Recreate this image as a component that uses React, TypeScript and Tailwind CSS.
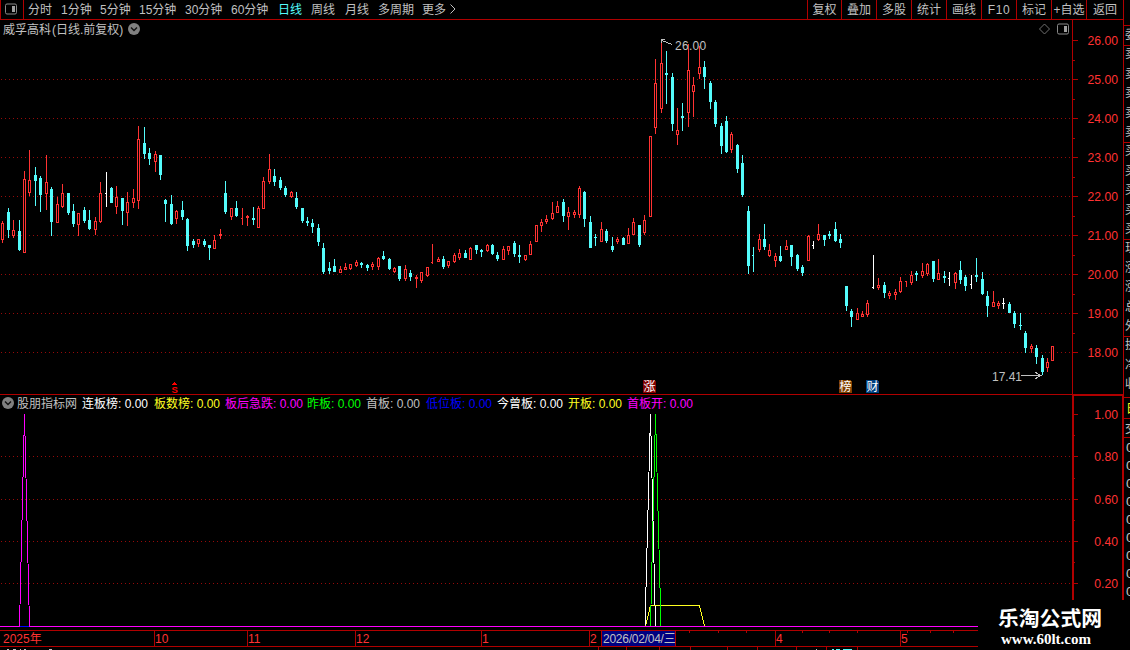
import React from "react";

type Tone = "r" | "c" | "w";
type Candle = [x: number, high: number, top: number, bottom: number, low: number, tone: Tone, tick?: "left"];

const CANDLES: Candle[] = [
  [2, 221, 223, 240, 243, "r"], [8, 208, 212, 230, 238, "c"], [13, 220, 230, 236, 238, "r"], [19, 220, 231, 250, 251, "c"],
  [24, 171, 179, 253, 253, "r"], [29, 150, 180, 193, 196, "r"], [35, 167, 175, 181, 206, "c"], [40, 176, 178, 195, 212, "c"],
  [46, 155, 182, 194, 210, "r"], [51, 187, 189, 222, 236, "c"], [57, 197, 204, 223, 223, "r"], [62, 184, 193, 207, 208, "r"],
  [68, 193, 193, 213, 215, "c"], [73, 204, 211, 224, 227, "c"], [78, 213, 213, 225, 236, "r"], [84, 207, 210, 221, 223, "c"],
  [89, 210, 220, 229, 230, "c"], [95, 217, 221, 230, 235, "r"], [100, 182, 193, 222, 223, "r"], [106, 172, 193, 194, 207, "w", "left"],
  [111, 187, 188, 203, 203, "c"], [116, 186, 197, 207, 214, "r"], [122, 198, 198, 211, 225, "c"], [127, 192, 202, 213, 226, "r"],
  [133, 189, 198, 203, 208, "r"], [138, 126, 139, 201, 209, "r"], [144, 127, 143, 154, 159, "c"], [149, 148, 153, 159, 165, "c"],
  [155, 151, 154, 162, 172, "r"], [160, 155, 155, 175, 180, "c"], [165, 199, 200, 204, 222, "c"], [171, 195, 204, 224, 225, "c"],
  [176, 210, 211, 219, 224, "r"], [182, 201, 210, 217, 220, "c"], [187, 218, 219, 246, 251, "c"], [193, 239, 241, 245, 248, "c"],
  [198, 239, 239, 244, 247, "r"], [204, 239, 241, 245, 247, "c"], [209, 245, 245, 248, 260, "c"], [214, 235, 240, 249, 249, "r"],
  [220, 229, 234, 236, 239, "r"], [225, 181, 193, 212, 214, "c"], [231, 208, 208, 217, 220, "r"], [236, 201, 208, 216, 217, "c"],
  [242, 208, 218, 219, 225, "r", "left"], [247, 215, 216, 218, 226, "r"], [253, 207, 218, 220, 225, "c"], [258, 206, 208, 228, 228, "r"],
  [263, 177, 181, 209, 209, "r"], [269, 154, 169, 182, 184, "r"], [274, 169, 176, 182, 186, "c"], [280, 177, 180, 188, 190, "c"],
  [285, 186, 188, 195, 197, "c"], [291, 191, 192, 197, 198, "r"], [296, 192, 198, 207, 209, "c"], [302, 208, 208, 221, 223, "c"],
  [307, 217, 221, 223, 226, "c"], [312, 219, 223, 227, 233, "c"], [318, 224, 228, 242, 246, "c"], [323, 243, 248, 272, 274, "c"],
  [329, 262, 268, 271, 274, "c"], [334, 259, 266, 272, 272, "c"], [340, 266, 269, 273, 273, "r"], [345, 263, 267, 270, 270, "r"],
  [350, 264, 264, 269, 270, "r"], [356, 260, 262, 266, 267, "r"], [361, 262, 263, 265, 268, "c"], [367, 264, 265, 268, 271, "c"],
  [372, 262, 264, 267, 270, "r"], [378, 257, 258, 267, 270, "r"], [383, 251, 256, 259, 260, "c"], [389, 258, 259, 269, 270, "c"],
  [394, 267, 268, 272, 273, "r"], [399, 266, 266, 279, 281, "c"], [405, 265, 269, 279, 281, "r"], [410, 270, 273, 277, 281, "c"],
  [416, 275, 277, 279, 288, "r"], [421, 272, 272, 281, 283, "r"], [427, 267, 267, 276, 277, "r"], [432, 244, 262, 263, 264, "r", "left"],
  [438, 257, 259, 262, 262, "r"], [443, 256, 259, 267, 269, "c"], [448, 261, 261, 266, 268, "r"], [454, 253, 255, 262, 263, "r"],
  [459, 249, 253, 258, 260, "r"], [465, 250, 253, 258, 258, "c"], [470, 247, 248, 260, 260, "r"], [476, 245, 245, 250, 254, "c"],
  [481, 249, 250, 252, 257, "c"], [487, 244, 245, 251, 252, "r"], [492, 244, 245, 254, 255, "c"], [497, 252, 255, 259, 261, "c"],
  [503, 246, 249, 260, 260, "r"], [508, 246, 246, 251, 255, "r"], [514, 241, 243, 254, 257, "c"], [519, 245, 255, 257, 263, "c"],
  [525, 255, 255, 260, 261, "r"], [530, 241, 244, 255, 255, "r"], [536, 225, 225, 242, 242, "r"], [541, 219, 222, 226, 232, "r"],
  [546, 215, 219, 222, 224, "r"], [552, 202, 213, 219, 220, "r"], [557, 201, 206, 213, 213, "r"], [563, 199, 202, 216, 222, "c"],
  [568, 207, 212, 217, 230, "r"], [574, 210, 212, 215, 218, "r"], [579, 186, 188, 215, 218, "r"], [584, 191, 192, 219, 227, "c"],
  [590, 216, 222, 248, 248, "c"], [595, 234, 237, 238, 246, "c"], [601, 222, 229, 242, 242, "r"], [606, 229, 231, 241, 243, "c"],
  [612, 237, 246, 250, 252, "c"], [617, 237, 239, 242, 244, "r"], [623, 237, 238, 245, 245, "c"], [628, 228, 235, 244, 244, "r"],
  [633, 218, 222, 235, 235, "r"], [639, 225, 225, 245, 247, "c"], [644, 215, 220, 233, 235, "r"], [650, 136, 136, 217, 217, "r"],
  [655, 59, 83, 128, 134, "r"], [661, 43, 63, 109, 113, "r"], [666, 51, 73, 75, 104, "c"], [672, 73, 77, 124, 131, "c"],
  [677, 108, 130, 135, 145, "r"], [682, 103, 116, 118, 131, "c"], [688, 44, 70, 113, 127, "r"], [693, 77, 85, 92, 117, "r"],
  [699, 46, 67, 74, 79, "r"], [704, 61, 67, 77, 89, "c"], [710, 81, 83, 102, 109, "c"], [715, 100, 102, 124, 127, "c"],
  [721, 123, 126, 146, 154, "c"], [726, 116, 121, 152, 153, "c"], [731, 132, 134, 150, 153, "r"], [737, 144, 145, 169, 173, "c"],
  [742, 155, 163, 195, 197, "c"], [748, 206, 211, 266, 274, "c"], [753, 247, 255, 256, 272, "c", "left"], [759, 234, 239, 250, 252, "r"],
  [764, 224, 239, 247, 250, "c"], [769, 244, 250, 256, 257, "r"], [775, 253, 256, 261, 267, "r"], [780, 246, 256, 261, 262, "c"],
  [786, 240, 246, 250, 250, "r"], [791, 245, 245, 257, 266, "c"], [797, 254, 255, 269, 271, "c"], [802, 265, 267, 273, 276, "c"],
  [808, 235, 236, 261, 261, "r"], [813, 241, 245, 246, 249, "w", "left"], [818, 224, 234, 240, 241, "r"], [824, 235, 235, 240, 246, "c"],
  [829, 231, 234, 236, 239, "c"], [835, 222, 229, 241, 242, "c"], [840, 234, 239, 243, 248, "c"], [846, 286, 286, 306, 311, "c"],
  [851, 309, 311, 317, 327, "c"], [857, 308, 313, 320, 320, "r"], [862, 311, 314, 317, 317, "r"], [867, 300, 303, 315, 317, "r"],
  [873, 255, 287, 288, 289, "w", "left"], [878, 278, 285, 288, 290, "r"], [884, 282, 285, 293, 298, "c"], [889, 291, 293, 296, 299, "r"],
  [895, 289, 292, 295, 300, "r"], [900, 277, 281, 292, 293, "r"], [906, 281, 281, 282, 287, "r", "left"], [911, 271, 275, 283, 285, "r"],
  [916, 271, 273, 275, 281, "c"], [922, 263, 271, 276, 278, "r"], [927, 263, 264, 274, 276, "r"], [933, 261, 261, 279, 282, "c"],
  [938, 259, 273, 280, 280, "r"], [944, 271, 276, 278, 283, "c"], [949, 272, 278, 279, 286, "w", "left"], [955, 272, 273, 283, 289, "r"],
  [960, 261, 270, 280, 284, "c"], [965, 275, 277, 286, 291, "c"], [971, 275, 284, 285, 289, "w", "left"], [976, 258, 275, 277, 282, "c"],
  [982, 272, 279, 294, 295, "c"], [987, 291, 296, 306, 317, "c"], [993, 291, 302, 307, 307, "r"], [998, 301, 303, 306, 309, "r"],
  [1003, 298, 303, 304, 309, "w"], [1009, 302, 304, 313, 313, "c"], [1014, 311, 313, 324, 328, "c"], [1020, 313, 325, 326, 330, "c"],
  [1025, 331, 333, 348, 353, "c"], [1031, 344, 346, 349, 353, "r"], [1036, 345, 348, 357, 364, "c"], [1042, 355, 358, 372, 375, "c"],
  [1047, 358, 362, 368, 372, "r"], [1052, 346, 346, 361, 361, "r"],
];

const TONES: Record<Tone, string> = { r: "#ff3232", c: "#54fcfc", w: "#ffffff" };

const PERIODS: [label: string, cell: string][] = [
  ["分时", "w-[33px]"], ["1分钟", "w-[39px]"], ["5分钟", "w-[39px]"], ["15分钟", "w-[46px]"], ["30分钟", "w-[46px]"],
  ["60分钟", "w-[47px]"], ["日线", "w-[33px] text-[#54fcfc]"], ["周线", "w-[34px]"], ["月线", "w-[33px]"],
  ["多周期", "w-[44px]"], ["更多", "w-[27px]"],
];

const ACTIONS: [label: string, cell: string][] = [
  ["复权", "w-[34px]"], ["叠加", "w-[35px]"], ["多股", "w-[35px]"], ["统计", "w-[35px]"], ["画线", "w-[35px]"],
  ["F10", "w-[35px] tracking-[0.6px]"], ["标记", "w-[35px]"], ["+自选", "w-[35px]"], ["返回", "w-[37px]"],
];

const READINGS: [label: string, cell: string][] = [
  ["连板榜", "w-[72px] text-white"], ["板数榜", "w-[71px] text-[#ffff20]"], ["板后急跌", "w-[82px] text-[#ff00ff]"],
  ["昨板", "w-[59px] text-[#00ff00]"], ["首板", "w-[60px] text-[#c0c0c0]"], ["低位板", "w-[71px] text-[#0000ff]"],
  ["今曾板", "w-[71px] text-white"], ["开板", "w-[59px] text-[#ffff20]"], ["首板开", "w-[70px] text-[#ff00ff]"],
];

const MONTHS: [label: string, cell: string][] = [
  ["2025年", "w-[154px] pl-[3px]"], ["10", "w-[93px] border-l"], ["11", "w-[108px] border-l"], ["12", "w-[126px] border-l"],
  ["1", "w-[108px] border-l"], ["2", "w-[186px] border-l"], ["4", "w-[125px] border-l"], ["5", "w-[78px] border-l"],
];

const WEEK_TICKS = [689, 718, 746, 802, 829, 857, 907, 930, 953];

const PRICE_ROWS = [26, 25, 24, 23, 22, 21, 20, 19, 18].map((price, i) => ({ text: price.toFixed(2), y: 40 + i * 39 }));
const SIGNAL_ROWS = [
  { text: "1.00", y: 414 }, { text: "0.80", y: 456 }, { text: "0.60", y: 499 }, { text: "0.40", y: 541 }, { text: "0.20", y: 583 },
];

const QUOTE_ROWS = ["委", "卖", "卖", "卖", "卖", "卖", "买", "买", "买", "买", "买", "现", "涨", "涨", "总", "外", "换", "净", "收"];

function CandleMark({ candle }: { candle: Candle }) {
  const [x, high, top, bottom, low, tone, tick] = candle;
  const color = TONES[tone];
  if (tick === "left") {
    return (
      <g fill={color}>
        <rect x={x} y={high} width={1} height={low - high} />
        <rect x={x - 1} y={top} width={1} height={1} />
      </g>
    );
  }
  const hollow = tone === "r" && bottom - top > 2;
  return (
    <g fill={color}>
      <rect x={x} y={high} width={1} height={low - high} />
      <rect x={x - 1} y={top} width={3} height={bottom - top} />
      {hollow && <rect x={x} y={top + 1} width={1} height={bottom - top - 2} fill="#000" />}
    </g>
  );
}

function Axis({ rows, minor }: { rows: { text: string; y: number }[]; minor: number[] }) {
  return (
    <g fill="#b00000">
      {rows.map((row) => (
        <g key={row.text}>
          <rect x={1073} y={row.y} width={5} height={1} />
          <text x={1118} y={row.y + 5} textAnchor="end" fill="#ff3232" fontSize={12.2}>{row.text}</text>
        </g>
      ))}
      {minor.map((y) => <rect key={y} x={1073} y={y} width={2} height={1} />)}
    </g>
  );
}

function GridLine({ y }: { y: number }) {
  return <line x1={1} x2={1072} y1={y + 0.5} y2={y + 0.5} stroke="#960a0a" strokeDasharray="1 3" />;
}

function PanelIcon({ className }: { className: string }) {
  return (
    <svg className={className} width="12" height="12" viewBox="0 0 12 12" fill="none">
      <rect x="0.5" y="1" width="11" height="10" rx="1.5" stroke="#8a8a8a" />
      <rect x="7" y="3" width="3" height="6" fill="#a0a0a0" />
    </svg>
  );
}

function RoundToggle() {
  return (
    <svg width="12" height="12" viewBox="0 0 12 12" className="shrink-0">
      <circle cx="6" cy="6" r="6" fill="#808080" />
      <path d="M3 4.5 6 7.5 9 4.5" fill="none" stroke="#111" strokeWidth="1.4" />
    </svg>
  );
}

function Toolbar() {
  return (
    <div className="flex h-5 w-[1123px] border-b border-[#b00000] leading-5 text-[#c0c0c0]">
      <div className="flex w-6 shrink-0 border-x border-[#b00000] pl-1 pt-[3px]">
        <PanelIcon className="block" />
      </div>
      <div className="flex h-[19px] pl-1">
        {PERIODS.map(([label, cell]) => <span key={label} className={`shrink-0 whitespace-nowrap ${cell}`}>{label}</span>)}
        <svg width="8" height="18" viewBox="0 0 8 18" fill="none" stroke="#c0c0c0"><path d="M1.5 4.5 6 9 1.5 13.5" /></svg>
      </div>
      <div className="ml-auto flex h-[19px]">
        {ACTIONS.map(([label, cell]) => (
          <span key={label} className={`flex shrink-0 justify-center whitespace-nowrap border-l border-[#b00000] ${cell}`}>{label}</span>
        ))}
      </div>
    </div>
  );
}

function Badge({ x, label, fill }: { x: number; label: string; fill: string }) {
  return (
    <g>
      <path d={`M${x} 380h11l2 2v11h-13z`} fill={fill} />
      <text x={x + 0.5} y={391} fill="#fff" fontSize={12}>{label}</text>
    </g>
  );
}

function PriceChart() {
  return (
    <section className="relative h-[374px] w-[1123px]">
      <svg className="block" width="1123" height="374" viewBox="0 20 1123 374" shapeRendering="crispEdges">
        {PRICE_ROWS.slice(1).map((row) => <GridLine key={row.y} y={row.y} />)}
        {CANDLES.map((candle) => <CandleMark key={candle[0]} candle={candle} />)}
        <rect x={1072} y={20} width={1} height={374} fill="#b00000" />
        <Axis rows={PRICE_ROWS} minor={[60, 99, 138, 177, 216, 255, 294, 333]} />
        <g fill="none" stroke="#c0c0c0">
          <path d="M672.5 44.5 661.5 40.5M664.5 39.5H661.5V43" />
          <path d="M1021 375.5H1041M1035.5 372.5 1041 375.5 1035.5 378.5" />
        </g>
        <text x={675} y={50} fill="#c0c0c0" fontSize={12} letterSpacing={0.3}>26.00</text>
        <text x={992} y={381} fill="#c0c0c0" fontSize={12}>17.41</text>
        <path d="M174 382h1v1h1v1h1v1h-5v-1h1v-1h1z" fill="#ff0000" />
        <text x={171.5} y={393} fill="#ff0000" fontSize={9.5} fontWeight={700}>S</text>
        <Badge x={643} label="涨" fill="#800000" />
        <Badge x={839} label="榜" fill="#804000" />
        <Badge x={866} label="财" fill="#004080" />
      </svg>
      <div className="absolute left-[3px] top-0 flex h-[18px] items-center gap-[5px] text-[#c0c0c0]">
        <span className="pt-[2px] leading-[18px]">威孚高科<span className="pl-px">(</span>日线.前复权)</span>
        <RoundToggle />
      </div>
      <div className="absolute left-[1039px] top-[3px] flex gap-[7px]">
        <svg width="11" height="12" viewBox="0 0 11 12"><path d="M5.5 1 10.5 6 5.5 11 .5 6z" fill="none" stroke="#707070" /></svg>
        <PanelIcon className="block" />
      </div>
    </section>
  );
}

function SignalChart() {
  return (
    <section className="relative h-[236px] w-[1123px]">
      <svg className="block" width="1123" height="236" viewBox="0 394 1123 236" shapeRendering="crispEdges">
        <g fill="#b00000">
          <rect x={0} y={394} width={1123} height={1} />
          <rect x={1072} y={394} width={51} height={2} />
          <rect x={1072} y={394} width={2} height={236} />
          <rect x={1122} y={394} width={1} height={236} />
        </g>
        {SIGNAL_ROWS.slice(1).map((row) => <GridLine key={row.y} y={row.y} />)}
        <Axis rows={SIGNAL_ROWS} minor={[435, 478, 520, 562]} />
        <g fill="none" strokeWidth={1}>
          <path d="M645.5 626 650.5 605.5H699.5L704.5 626" stroke="#ffff20" />
          <path d="M650.5 626 655.5 414 661 626" stroke="#00ff00" />
          <path d="M645 626 650.5 414 655.5 626" stroke="#fff" />
          <path d="M19.5 626 24.5 414 29.5 626" stroke="#ff00ff" />
        </g>
        <rect x={0} y={626} width={1072} height={1} fill="#ff00ff" />
        <rect x={20} y={626} width={9} height={1} fill="#0000ff" />
      </svg>
      <div className="absolute left-[2px] top-0 flex h-[18px] items-center">
        <RoundToggle />
        <div className="flex pt-[2px] leading-[18px]">
          <span className="w-[68px] shrink-0 pl-[3px] text-[#c0c0c0]">股朋指标网</span>
          {READINGS.map(([label, cell]) => <span key={label} className={`shrink-0 whitespace-nowrap ${cell}`}>{label}: 0.00</span>)}
        </div>
      </div>
    </section>
  );
}

function DateAxis() {
  return (
    <div className="relative flex h-[17px] w-[978px] overflow-hidden border-y border-[#b00000] leading-[17px] text-[#ff3232]">
      {MONTHS.map(([label, cell]) => (
        <span key={label} className={`h-[15px] shrink-0 border-[#b00000] ${cell}`}>{label}</span>
      ))}
      <svg className="absolute left-0 top-0" width="978" height="2" viewBox="0 0 978 2" fill="#b00000" shapeRendering="crispEdges">
        {WEEK_TICKS.map((x) => <rect key={x} x={x} width={1} height={2} />)}
      </svg>
      <span className="absolute left-[601px] top-0 h-[15px] w-[75px] whitespace-nowrap border-x border-[#b00000] bg-[#000080] pl-px tracking-[-0.25px] text-[#c0c0c0]">
        2026/02/04/三
      </span>
    </div>
  );
}

function SideStrip() {
  return (
    <svg className="block shrink-0" width="7" height="650" viewBox="1123 0 7 650" shapeRendering="crispEdges">
      <g fill="#c0c0c0" fontSize={12}>
        {QUOTE_ROWS.map((s, i) => <text key={i} x={1125} y={39 + i * 19.4}>{s}</text>)}
        <text x={1125} y={433}>交</text>
        {Array.from({ length: 9 }, (_, i) => <text key={i} x={1126} y={452 + i * 18} fontSize={13.5}>0</text>)}
      </g>
      <text x={1126} y={413} fill="#ffff20" fontSize={12}>日</text>
      <g fill="#b00000">
        <rect x={1123} y={0} width={1} height={600} />
        {[25, 45, 142, 239, 336, 397, 418, 437].map((y) => <rect key={y} x={1123} y={y} width={7} height={1} />)}
      </g>
    </svg>
  );
}

export default function App() {
  return (
    <main className="relative flex h-[650px] w-[1130px] overflow-hidden bg-black font-['Liberation_Sans','Noto_Sans_CJK_SC',sans-serif] text-[12px]">
      <div className="flex w-[1123px] shrink-0 flex-col">
        <Toolbar />
        <PriceChart />
        <SignalChart />
        <DateAxis />
        <svg className="block" width="978" height="3" viewBox="0 0 978 3" fill="#b00000" shapeRendering="crispEdges">
          {[598, 626, 659, 690, 727, 757, 796, 826, 857].map((x) => <rect key={x} x={x} width={1} height={3} />)}
          <path d="M7 2h2v1H7zM13 2h3v1h-3zM20 2h1v1h-1zM24 2h2v1h-2zM49 2h3v1h-3zM816 2h1v1h-1z" fill="#c0c0c0" />
          <path d="M832 2h2v1h-2zM836 2h4v1h-4zM843 2h9v1h-9z" fill="#54fcfc" />
        </svg>
      </div>
      <SideStrip />
      <div className="absolute bottom-0 right-0 flex h-[50px] w-[152px] flex-col bg-black pl-5 pt-[6px] text-white">
        <span className="text-[20.8px] font-bold leading-[26px]">乐淘公式网</span>
        <span className="pl-[3px] font-['Liberation_Serif',serif] text-[15px] font-bold leading-[14px]">www.60lt.com</span>
      </div>
    </main>
  );
}
